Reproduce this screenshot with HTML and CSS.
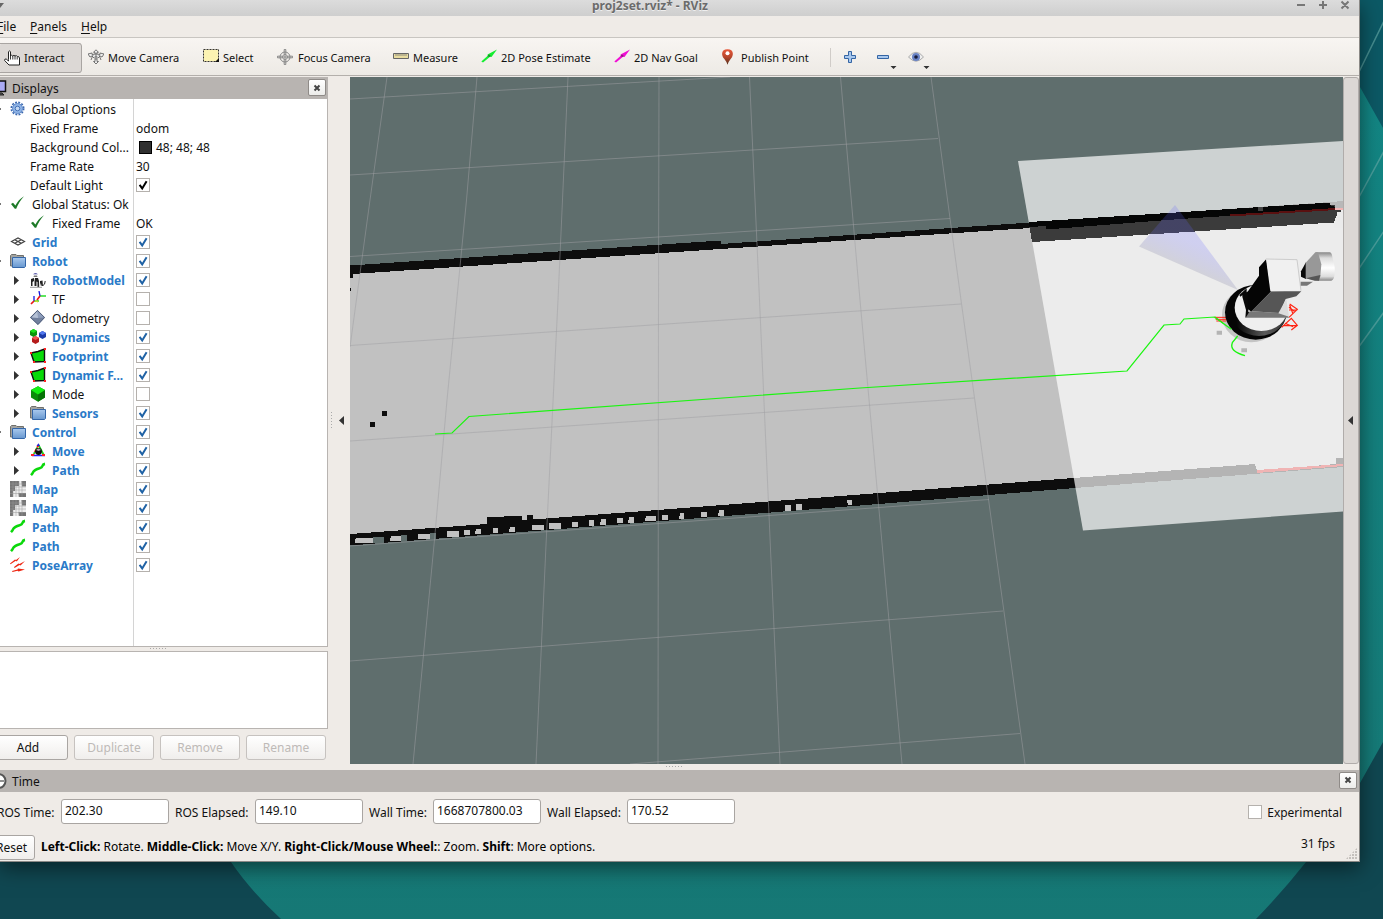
FILE: index.html
```html
<!DOCTYPE html>
<html lang="en">
<head>
<meta charset="utf-8">
<title>proj2set.rviz* - RViz</title>
<link rel="stylesheet" href="styles.css">
</head>
<body>
<svg class="defs" width="0" height="0">
  <defs>
    <linearGradient id="gf" x1="0" y1="0" x2="0" y2="1"><stop offset="0" stop-color="#a9c9ee"/><stop offset="1" stop-color="#6797cf"/></linearGradient>
    <linearGradient id="gpin" x1="0" y1="0" x2="0" y2="1"><stop offset="0" stop-color="#e8593a"/><stop offset=".5" stop-color="#b8462c"/><stop offset="1" stop-color="#50301c"/></linearGradient>
    <symbol id="tick" viewBox="0 0 14 14"><path d="M3.600 6.800 L6.200 10.400 L10.600 3.200" fill="none" stroke="currentColor" stroke-width="2"/></symbol>
    <symbol id="gear" viewBox="0 0 16 16"><circle cx="7.500" cy="7.500" r="6.200" fill="none" stroke="#3a68b0" stroke-width="1.600" stroke-dasharray="1.9 1.35"/><circle cx="7.500" cy="7.500" r="5" fill="#8fb4e6" stroke="#5c87c8"/><circle cx="7.500" cy="7.500" r="2.300" fill="#c4d9f4" stroke="#4673b8"/></symbol>
    <symbol id="ok" viewBox="0 0 16 16"><path d="M1 8 L3 6.700 L5.400 9.600 C7.500 5.500 10 2.600 14 .2 C10.500 4 8 8 6.200 12.800 L4.800 12.800 Z" fill="#1d7a28"/></symbol>
    <symbol id="grid" viewBox="0 0 16 16"><path d="M1.500 7.500 L8 4 L14.500 7.500 L8 11 Z M4.700 5.700 L11.300 9.300 M11.300 5.700 L4.700 9.300" fill="none" stroke="#444" stroke-width="1.200"/></symbol>
    <symbol id="folder" viewBox="0 0 16 16"><path d="M.5 13V2.500L1.500 1.500H6L7 2.500H13.500V13Z" fill="#a3a39f" stroke="#70706c"/><path d="M2.500 4.500H15.500V13.500L14.500 14.500H2.500Z" fill="url(#gf)" stroke="#3466a8"/></symbol>
    <symbol id="robot" viewBox="0 0 16 16"><path d="M3 2.200Q5.500.2 8 2.200Z" fill="#23238c"/><path d="M4 3.500H7L7.500 5H3.500Z" fill="#777"/><path d="M1 7L4 6V9L2.500 10V14H1ZM5 6H8L9 9V15H7.500V10L6.500 9.500V14H4.500V9ZM10 9L12.500 8.500L13 14H11.500L10.800 11 9.800 15Z" fill="#222"/><path d="M0 15.300h12" stroke="#999"/><path d="M13 13.500Q15 13 15.200 9" fill="none" stroke="#222"/></symbol>
    <symbol id="tf" viewBox="0 0 16 16"><g fill="none" stroke-width="1.300"><path d="M4 10H9M10 5H16" stroke="#27dd27"/><path d="M4 10V5M10 5L9 0" stroke="#1616e0"/><path d="M4 10L1 13M10 5L7 9" stroke="#ec1818" stroke-width="1.700"/><path d="M5 9.500L8 11" stroke="#d9d91c"/></g></symbol>
    <symbol id="odo" viewBox="0 0 16 16"><path d="M7.500 0L15 7.500L8 15L0 7.500Z" fill="#71809d"/><path d="M7.500 1L8 8L1.500 7.500Z" fill="#b5c1d6"/><path d="M8 1L14 7.500L8 8Z" fill="#8e9dbb"/><path d="M7.500 .5L14.500 7.500L8 14.500L.5 7.500Z" fill="none" stroke="#4a5876" stroke-width=".8"/></symbol>
    <symbol id="dyn" viewBox="0 0 16 16"><path d="M0 2L3.500 0L7 2V6L3.500 8L0 6Z" fill="#0c930c"/><path d="M0 2L3.500 0L7 2L3.500 4Z" fill="#1be31b"/><path d="M9 4L12.500 2L16 4V8L12.500 10L9 8Z" fill="#1c3ba8"/><path d="M9 4L12.500 2L16 4L12.500 6Z" fill="#5278ee"/><path d="M2 9L5.500 7L9 9V13L5.500 15L2 13Z" fill="#b51b1b"/><path d="M2 9L5.500 7L9 9L5.500 11Z" fill="#f05454"/></symbol>
    <symbol id="poly" viewBox="0 0 16 16"><path d="M1 5L8 3.500L14.500 1V13.500L4 14Z" fill="#08da08" stroke="#111" stroke-width="1.400"/><path d="M0 4h2v2H0zM14 0h2v2h-2zM14 13h2v2h-2zM3 13h2v2H3z" fill="#f22"/></symbol>
    <symbol id="cube" viewBox="0 0 16 16"><path d="M1 4L8 .2L15 4V11.500L8 15.800L1 11.500Z" fill="#0a8d0a"/><path d="M8 8V15.800L15 11.500V4Z" fill="#067306"/><path d="M1 4L8 .2L15 4L8 8.500Z" fill="#13f013"/></symbol>
    <symbol id="move" viewBox="0 0 16 16"><path d="M8.500 2L14 12.500" stroke="#1bd51b" stroke-width="1.800"/><path d="M8.500 2L3 12.500" stroke="#f11" stroke-width="1.800" stroke-dasharray="3 2"/><path d="M8.500 2L3 12.500" stroke="#1bd51b" stroke-width="1.800" stroke-dasharray="2 3" stroke-dashoffset="2"/><path d="M2 12.500H15" stroke="#22f" stroke-width="1.500"/><path d="M6.500 3L8.500 .3L10 3Z" fill="#22d"/><path d="M1 11h3v2H1zM12 11h3v2h-3z" fill="#f22"/><circle cx="8.500" cy="8.500" r="3.400" fill="#0d0d0d"/><path d="M6 7Q8.500 4 11 7L8.500 8Z" fill="#aaa"/></symbol>
    <symbol id="path" viewBox="0 0 16 16"><path d="M1 13.200C4.500 9.500 1.800 10.200 5.500 7.900S11.800 6.800 12.300 4.300Q12.800 2.200 15 1.900" fill="none" stroke="#0bd80b" stroke-width="2.600"/></symbol>
    <symbol id="map" viewBox="0 0 16 16"><path d="M0 0H16V16H0Z" fill="#eee"/><path d="M0 0H9V5H5V10H3V16H0ZM11.500 0H16V5.500H12ZM8.500 12H16V16H9Z" fill="#757575"/><path d="M3 0V16M6 0V16M9 0V16M12 0V16M0 3H16M0 6H16M0 9H16M0 12.500H16" stroke="#999" stroke-width=".5"/></symbol>
    <symbol id="poses" viewBox="0 0 16 16"><path d="M0 6.500L5 2.500L6 3L10 0L6.800 4.500L5.800 3.800L.5 7.300ZM4 10L8.500 6.500L9.500 7L15 4L10.500 8.500L9.500 8L4.500 11ZM2 14L7.500 12.500L8 11.500L15 12.500L8.500 14.500L7.500 13.800L2.500 15Z" fill="#ee2612"/></symbol>
    <symbol id="arrow" viewBox="0 0 16 16"><path d="M.3 12.500L7 6.600L6.500 5.500L16 .5L10.500 8L9 7.800L2 13.500Z" fill="currentColor"/><path d="M6 7l2-1.500 2 1.500-1.500 1z" fill="#222" opacity=".45"/></symbol>
  </defs>
</svg>
<svg class="wallpaper" viewBox="0 0 1383 919">
  <defs><linearGradient id="wr" x1="0" y1="0" x2="0" y2="1"><stop offset="0" stop-color="#128886"/><stop offset="1" stop-color="#167875"/></linearGradient></defs>
  <rect width="1383" height="919" fill="#104751"/>
  <path d="M0 0H1383V742L1360 783Q1336 824 1306 862Q1284 890 1256 919H281Q250 890 231 862Z" fill="url(#wr)"/>
  <path d="M1300 0H1383V128L1360 87Z" fill="#0c5965"/>
  <path d="M1358 74L1384 21M1358 199L1384 151M1358 270L1384 231M1358 348L1384 312" stroke="#65aaa8" stroke-width="1.500" opacity=".65"/>
</svg>
<div class="window">
  <header class="titlebar">
    <i class="wm-menu"></i><span class="title">proj2set.rviz* - RViz</span>
    <svg class="wm" width="60" height="16" viewBox="1295 0 60 16"><path d="M1297 5h8M1319 5h8M1323 1v8M1341.500 1.500l7 7M1348.500 1.500l-7 7" stroke="#777" stroke-width="2"/></svg>
  </header>
  <nav class="menu"><span class="m1"><u>F</u>ile</span><span class="m2"><u>P</u>anels</span><span><u>H</u>elp</span></nav>
  <div class="toolbar">
    <div class="tool active"><svg viewBox="0 0 16 16"><path d="M4.500 9.500V1.700Q5.500 .2 6.500 1.700V6Q7.700 4.400 8.700 6Q10 4.600 11 6Q12.500 5 13.200 6.500Q15 6 15.500 8V15H5L.6 10.500Q.4 8.600 2.200 9L4.500 11Z" fill="#fff" stroke="#222"/><path d="M6.500 6V9.500M8.800 6V9.500M11 6V9.500M13.200 7V9.500" stroke="#222" stroke-width=".9"/></svg><span>Interact</span></div>
    <div class="tool w-move"><svg viewBox="0 0 16 16"><path d="M8 .8L5.500 3.300H7L7 5H9V3.300H10.500ZM8 15L5.500 12.500H7V10H9V12.500H10.500ZM0 5L4 4V5.500L8 5L12 5.500V4L16 5L14 8L12 7L10 9H6L4 7L2 8ZM5 6L3 11M11 6L13 11" fill="#eee" stroke="#666" stroke-width=".9"/><circle cx="8" cy="7.500" r="1.300" fill="#888"/></svg><span>Move Camera</span></div>
    <div class="tool w-select"><svg viewBox="0 0 16 16"><path d="M.5 .5H15.500V12.500H.5Z" fill="#fcf3b2" stroke="#333" stroke-dasharray="2 1"/><path d="M16 9V13H12Z" fill="#111"/></svg><span>Select</span></div>
    <div class="tool w-focus"><svg viewBox="0 0 16 16"><g fill="none" stroke="#888"><circle cx="8" cy="8" r="5"/><circle cx="8" cy="8" r="2.500"/><path d="M7.200 5V.5H8.800V5M7.200 11V15.500H8.800V11M5 7.200H.5V8.800H5M11 7.200H15.500V8.800H11M8 5V11M5 8H11"/></g></svg><span>Focus Camera</span></div>
    <div class="tool w-measure"><svg viewBox="0 0 16 16"><path d="M.5 4.500H15.500V9.500H.5Z" fill="#e8dca0" stroke="#666"/><path d="M3 5V7M5 5V7M7 5V7M9 5V7M11 5V7M13 5V7" stroke="#777" stroke-width=".8"/></svg><span>Measure</span></div>
    <div class="tool w-pose"><svg class="green" viewBox="0 0 16 16"><use href="#arrow"/></svg><span>2D Pose Estimate</span></div>
    <div class="tool w-nav"><svg class="pink" viewBox="0 0 16 16"><use href="#arrow"/></svg><span>2D Nav Goal</span></div>
    <div class="tool w-pub"><svg viewBox="0 0 16 16"><path d="M7.500 .2C.5 .2 1.500 7 4 9.500Q6.500 12.500 7.500 15.800Q8.500 12.500 11 9.500C13.500 7 14.500 .2 7.500 .2Z" fill="url(#gpin)"/><circle cx="7.500" cy="4.200" r="2" fill="#fff"/></svg><span>Publish Point</span></div>
    <i class="sep"></i>
    <svg class="tb-extra" viewBox="840 45 100 28"><path d="M848.500 51.500h3v4h4v3h-4v4h-3v-4h-4v-3h4zM877.500 55.500h11v3h-11z" fill="#a8c8ee" stroke="#3465a4"/><path d="M890.500 66h6l-3 3zM923.500 66h6l-3 3z" fill="#333"/><path d="M908.500 57Q916 47.500 923.500 57Q916 65.500 908.500 57Z" fill="#eee" stroke="#aaa"/><circle cx="916" cy="57" r="4" fill="#6882c4"/><circle cx="916" cy="57" r="1.800" fill="#171c3a"/></svg>
  </div>
  <div class="middle">
    <aside class="displays">
      <div class="dock-head"><svg class="dock-icon" viewBox="0 0 18 18"><path d="M1 2H15.500V12.500H1Z" fill="#aaaaf4" stroke="#111" stroke-width="1.500"/><path d="M7 16H14L12 14H9" fill="#555" stroke="#222"/></svg><span>Displays</span><b class="close"><svg viewBox="0 0 8 8"><path d="M1.500 1.500l5 5M6.500 1.500l-5 5" stroke="#444" stroke-width="2"/></svg></b></div>
      <div class="tree">
        <div class="row exp"><div class="name"><svg><use href="#gear"/></svg>Global Options</div></div>
        <div class="row"><div class="name prop">Fixed Frame</div><div class="val">odom</div></div>
        <div class="row"><div class="name prop">Background Col...</div><div class="val"><i class="swatch"></i>48; 48; 48</div></div>
        <div class="row"><div class="name prop">Frame Rate</div><div class="val">30</div></div>
        <div class="row"><div class="name prop">Default Light</div><div class="val"><i class="cb dark"><svg><use href="#tick"/></svg></i></div></div>
        <div class="row exp"><div class="name"><svg><use href="#ok"/></svg>Global Status: Ok</div></div>
        <div class="row"><div class="name sub"><svg><use href="#ok"/></svg>Fixed Frame</div><div class="val">OK</div></div>
        <div class="row"><div class="name on"><svg><use href="#grid"/></svg>Grid</div><div class="val"><i class="cb"><svg><use href="#tick"/></svg></i></div></div>
        <div class="row exp"><div class="name on"><svg><use href="#folder"/></svg>Robot</div><div class="val"><i class="cb"><svg><use href="#tick"/></svg></i></div></div>
        <div class="row"><div class="name sub tri on"><svg><use href="#robot"/></svg>RobotModel</div><div class="val"><i class="cb"><svg><use href="#tick"/></svg></i></div></div>
        <div class="row"><div class="name sub tri"><svg><use href="#tf"/></svg>TF</div><div class="val"><i class="cb"></i></div></div>
        <div class="row"><div class="name sub tri"><svg><use href="#odo"/></svg>Odometry</div><div class="val"><i class="cb"></i></div></div>
        <div class="row"><div class="name sub tri on"><svg><use href="#dyn"/></svg>Dynamics</div><div class="val"><i class="cb"><svg><use href="#tick"/></svg></i></div></div>
        <div class="row"><div class="name sub tri on"><svg><use href="#poly"/></svg>Footprint</div><div class="val"><i class="cb"><svg><use href="#tick"/></svg></i></div></div>
        <div class="row"><div class="name sub tri on"><svg><use href="#poly"/></svg>Dynamic F...</div><div class="val"><i class="cb"><svg><use href="#tick"/></svg></i></div></div>
        <div class="row"><div class="name sub tri"><svg><use href="#cube"/></svg>Mode</div><div class="val"><i class="cb"></i></div></div>
        <div class="row"><div class="name sub tri on"><svg><use href="#folder"/></svg>Sensors</div><div class="val"><i class="cb"><svg><use href="#tick"/></svg></i></div></div>
        <div class="row exp"><div class="name on"><svg><use href="#folder"/></svg>Control</div><div class="val"><i class="cb"><svg><use href="#tick"/></svg></i></div></div>
        <div class="row"><div class="name sub tri on"><svg><use href="#move"/></svg>Move</div><div class="val"><i class="cb"><svg><use href="#tick"/></svg></i></div></div>
        <div class="row"><div class="name sub tri on"><svg><use href="#path"/></svg>Path</div><div class="val"><i class="cb"><svg><use href="#tick"/></svg></i></div></div>
        <div class="row"><div class="name on"><svg><use href="#map"/></svg>Map</div><div class="val"><i class="cb"><svg><use href="#tick"/></svg></i></div></div>
        <div class="row"><div class="name on"><svg><use href="#map"/></svg>Map</div><div class="val"><i class="cb"><svg><use href="#tick"/></svg></i></div></div>
        <div class="row"><div class="name on"><svg><use href="#path"/></svg>Path</div><div class="val"><i class="cb"><svg><use href="#tick"/></svg></i></div></div>
        <div class="row"><div class="name on"><svg><use href="#path"/></svg>Path</div><div class="val"><i class="cb"><svg><use href="#tick"/></svg></i></div></div>
        <div class="row"><div class="name on"><svg><use href="#poses"/></svg>PoseArray</div><div class="val"><i class="cb"><svg><use href="#tick"/></svg></i></div></div>
      </div>
      <div class="hsplit"><i></i></div>
      <div class="help"></div>
      <div class="buttons"><span class="btn first">Add</span><span class="btn off">Duplicate</span><span class="btn off">Remove</span><span class="btn off">Rename</span></div>
    </aside>
    <div class="vsplit"><i class="dots"></i><i class="left"></i></div>
    <svg class="view" viewBox="350 77 993 687">
      <defs>
        <linearGradient id="cone" gradientUnits="userSpaceOnUse" x1="1200" y1="230" x2="1182" y2="272"><stop offset=".3" stop-color="#6464ff" stop-opacity=".21"/><stop offset="1" stop-color="#999" stop-opacity=".3"/></linearGradient>
        <linearGradient id="cyl" x1="0" y1="0" x2="0" y2="1"><stop offset="0" stop-color="#888"/><stop offset=".2" stop-color="#ddd"/><stop offset=".55" stop-color="#fff"/><stop offset=".85" stop-color="#ddd"/><stop offset="1" stop-color="#888"/></linearGradient>
        <linearGradient id="rim" x1="0" y1="0" x2="1" y2="0"><stop offset=".1" stop-color="#050505"/><stop offset=".6" stop-color="#5a5a5a"/><stop offset="1" stop-color="#333"/></linearGradient>
      </defs>
      <rect x="350" y="77" width="993" height="687" fill="#5f6e6d"/>
      <g shape-rendering="crispEdges">
        <path d="M350 269L1343 204V465L350 540Z" fill="#c1c1c1"/>
        <path d="M350 265.500L721 240.500V244L1030 222.500L1330 202V209L1030 228L353 274V278H350ZM350 288h1v3h-1z" fill="#0d0d0d"/>
        <path d="M350 534L487 524V517.500L522 515.500V520H527V514.500H533V519.500L860 494.500L1255 464L1257 471L1336 464V458H1343V467L1075 488L860 505.500L350 545.500Z" fill="#0d0d0d"/>
        <path d="M355 539l2-1h16v5h-18zM391 536h10v5h-11zM418 534h12v5h-12zM447 531h12v6h-12zM464 530h6v5h-6zM476 529h5v5h-6zM493 528h5v5h-5zM510 527h5v5h-6zM532 525h12v5h-12zM549 523h12v6h-12zM572 522h6v5h-6zM589 520h5v6h-5zM601 519h5v6h-6zM617 518h6v5h-6zM629 517h5v6h-6zM646 516h10v5h-11zM662 515h6v5h-6zM680 513h4v6h-5zM701 512h6v5h-6zM719 510h5v6h-6zM785 505h6v6h-6zM796 504h6v6h-6zM847 500h5v5h-4z" fill="#c1c1c1"/>
        <path d="M373 537h11v6h-11zM401 535h6v6h-6zM430 533h6v6h-6z" fill="#5f6e6d"/>
        <path d="M370 422h5v5h-5zM382 411h5v5h-5z" fill="#0d0d0d"/>
      </g>
      <g class="gridlines">
        <path d="M350 99L730 77M350 175L938 138.500M350 256.500L950 218.500M350 345.500L961 304M350 441L974 398M350 546L989 499.500M350 661L1003 611M630 764L1020 733.500"/>
        <path d="M387 77L370 200L350 347M477 77L466.500 200L447 400L434 545L413 764M568 77L558 300L546 545L536 764M659 77L658.500 300L658 764M749.500 77L759.500 300L780 764M840.500 77L860 300L902 764M931 77L961 300L1025 764"/>
      </g>
      <path d="M1018 161L1343 141V511.500L1083 530.500Z" fill="#fff" opacity=".69"/>
      <g shape-rendering="crispEdges">
        <path d="M1029 223L1330 202.500L1335 205L1341 211L1336 216L1334 222.500L1032 242Z" fill="#3b3b3b"/>
        <path d="M1337 212h6v16h-9v-5h2v-4h1z" fill="#ebebeb"/>
        <path d="M1029 222L1330 202.500V205L1335 207V209L1180 219L1046 229.500V226L1029 227Z" fill="#050606"/>
        <path d="M1258 207h5v4h-5z" fill="#444"/><path d="M1230 214.500L1336 208V210L1230 216.500Z" fill="#5a1010"/>
        <path d="M1330 202L1343 201V208H1335V205H1330Z" fill="#b8b8b8"/><path d="M1335 208h8v2h-8z" fill="#f0b4b4"/>
        <path d="M1257 470L1343 464V466L1257 473Z" fill="#f0b4b4"/>
      </g>
      <path d="M1175 205L1139 246.500L1238 290Z" fill="url(#cone)"/>
      <path d="M435 434L452 433L469 416.500L860 388L1127 371L1164 325L1180 324L1184 319L1215 317L1234 331" class="route"/>
      <g transform="translate(1183 230) scale(.33333)">
        <path d="M101 302h16v12h-16zM175 355h17v12h-17z" fill="#b4b4b4"/>
        <ellipse cx="205" cy="255" rx="88" ry="82" fill="#c4c4c4"/>
        <path d="M95 262h35M98 268h32M100 273h30" stroke="#f21" stroke-width="3"/>
        <ellipse cx="218" cy="247" rx="92" ry="82" fill="#050505"/>
        <ellipse cx="228" cy="243" rx="84" ry="75" fill="url(#rim)"/>
        <ellipse cx="235" cy="233" rx="80" ry="70" fill="#efefef"/>
        <path d="M320 222L343 238L318 262M318 240H343M320 225L330 252M318 232L334 244M296 292L325 265L343 286L325 300M300 287H343M306 280L330 290" stroke="#f21" stroke-width="3.500" fill="none"/>
        <path d="M169 195L191 175V185L172 200ZM178 192L196 184V245L205 252L187 263L189 240L178 200Z" fill="#080808"/>
        <path d="M250 87L228 112V137L195 184V238L205 245L265 184Z" fill="#050505"/>
        <path d="M200 244L312 250L318 263L188 263Z" fill="#777"/>
        <path d="M205 244L265 184H355L340 199L308 207L290 249Z" fill="#565656"/>
        <path d="M310 207L318 260L286 250Z" fill="#dcdcdc"/>
        <path d="M249 87L342 89L354 182L262 184Z" fill="#f0f0f0"/>
        <path d="M249 87L342 89L354 182" fill="none" stroke="#bbb" stroke-width="2"/>
        <path d="M369 97L354 124V140L369 147Z" fill="#080808"/>
        <path d="M353 155L390 155L372 167H353Z" fill="#777"/>
        <path d="M398 67H440Q446 67 448 80L455 110Q457 151 445 152H405Z" fill="url(#cyl)"/>
        <path d="M368 98L397 67H405L415 103L412 139L405 152L368 145Z" fill="#989898"/>
        <path d="M368 145L412 135L408 152H395Z" fill="#555"/>
        <path d="M95 262L145 298M164 318L148 338Q138 364 186 377" stroke="#1bf510" stroke-width="4" fill="none"/>
      </g>
    </svg>
    <div class="rail"><i class="left"></i></div>
  </div>
  <div class="gap"><i></i></div>
  <div class="dock-head time"><svg class="dock-icon" viewBox="0 0 18 18"><circle cx="8.500" cy="9" r="7" fill="#fff" stroke="#555" stroke-width="2"/><path d="M9 4V9H14" stroke="#222" fill="none"/></svg><span>Time</span><b class="close"><svg viewBox="0 0 8 8"><path d="M1.500 1.500l5 5M6.500 1.500l-5 5" stroke="#444" stroke-width="2"/></svg></b></div>
  <div class="times">
    <label class="l1">ROS Time:</label><span class="field">202.30</span>
    <label class="l2">ROS Elapsed:</label><span class="field">149.10</span>
    <label class="l3">Wall Time:</label><span class="field">1668707800.03</span>
    <label class="l4">Wall Elapsed:</label><span class="field">170.52</span>
    <span class="exper"><i class="cb"></i>Experimental</span>
  </div>
  <footer class="status"><span class="btn reset">Reset</span><p><b>Left-Click:</b> Rotate. <b>Middle-Click:</b> Move X/Y. <b>Right-Click/Mouse Wheel:</b>: Zoom. <b>Shift</b>: More options.</p><span class="fps">31 fps</span><i class="grip"></i></footer>
</div>
</body>
</html>
```
FILE: styles.css
```css
* { box-sizing: border-box; }
body { margin: 0; width: 1383px; height: 919px; overflow: hidden; position: relative; font: 12px/19px "Noto Sans", sans-serif; color: #111; }
i { font-style: normal; }
svg { display: block; flex: none; }
.defs { position: absolute; }
.wallpaper { position: absolute; left: 0; top: 0; width: 1383px; height: 919px; }
.window { position: relative; width: 1360px; height: 862px; display: flex; flex-direction: column; background: #efebe7; border-right: 1px solid #8b8986; border-bottom: 1px solid #8b8986; box-shadow: 0 6px 20px rgba(0,0,0,.5); white-space: nowrap; }
.titlebar { height: 16px; flex: none; display: flex; align-items: flex-start; background: linear-gradient(#dcdcdc, #cecece); }
.wm-menu { width: 4px; height: 5px; margin-top: 3px; background: #666; clip-path: polygon(0 0, 100% 0, 0 100%); }
.title { flex: 1; margin-left: 588px; line-height: 11px; font-weight: 700; color: #6b6b6b; text-shadow: 0 1px #eee; }
.wm { margin-right: 4px; }
.menu { height: 22px; flex: none; display: flex; border-bottom: 1px solid #c8c5c1; line-height: 21px; }
.menu u { text-underline-offset: 2px; }
.menu .m1 { width: 30px; text-indent: -3px; }
.menu .m2 { width: 51px; }
.toolbar { height: 38px; flex: none; display: flex; align-items: center; background: linear-gradient(#f8f5f2, #edeae5); border-bottom: 1px solid #b3afab; font-size: 11px; }
.tool { display: flex; align-items: center; gap: 4px; }
.tool span { padding-top: 2px; }
.tool svg { width: 16px; height: 16px; }
.tool.active { width: 88px; height: 30px; margin-top: 2px; padding-left: 4px; background: linear-gradient(to right, #dcd8d5 0 81px, transparent 81px); border-radius: 3px; position: relative; }
.tool.active span { padding-top: 0; }
.tool.active::after { content: ""; position: absolute; inset: 0 6px 0 -4px; border: 1px solid #a9a5a2; border-radius: 3px; }
.w-move { width: 115px; } .w-select { width: 75px; } .w-focus { width: 115px; } .w-measure { width: 88px; } .w-pose { width: 133px; } .w-nav { width: 106px; } .w-pub { width: 110px; }
.tool.w-focus { margin-left: -1px; width: 116px; gap: 5px; }
.tool.w-pub { gap: 5px; }
.green { color: #15ee30; } .pink { color: #f00fd4; }
.sep { width: 1px; height: 19px; margin: 2px 9px 0 0; background: #d0ccc8; }
.tb-extra { width: 100px; height: 28px; margin-top: 4px; }
.middle { height: 688px; flex: none; display: flex; padding-top: 1px; }
.displays { width: 328px; height: 687px; display: flex; flex-direction: column; }
.dock-head { height: 22px; flex: none; display: flex; align-items: center; background: #b8b4b1; }
.dock-icon { width: 18px; height: 18px; margin-left: -10px; margin-right: 4px; }
.dock-head .close { width: 18px; height: 17px; margin: -1px 2px 0 auto; border: 1px solid #8f8b88; border-radius: 2px; background: linear-gradient(#fff, #ececea); display: grid; place-items: center; }
.close svg { width: 8px; height: 8px; }
.tree { height: 548px; flex: none; padding-top: 1px; background: linear-gradient(to right, #fff 133px, #d4d4d4 133px 134px, #fff 134px); border-right: 1px solid #b8b4b1; border-bottom: 1px solid #b8b4b1; }
.row { height: 19px; display: flex; }
.name { width: 133px; display: flex; align-items: center; gap: 6px; padding-left: 10px; }
.name svg { width: 16px; height: 16px; margin-top: -1px; }
.name.prop, .name.sub { padding-left: 30px; }
.name.on { font-weight: 700; color: #2a7ac8; }
.name.tri { padding-left: 14px; }
.name.tri::before { content: ""; width: 5px; height: 9px; margin-right: 5px; background: #333; clip-path: polygon(0 0, 100% 50%, 0 100%); }
.exp { background: linear-gradient(#777, #777) 0 8px / 1px 2px no-repeat; }
.val { display: flex; align-items: center; padding-left: 3px; }
.swatch { width: 13px; height: 13px; margin: 0 4px 0 3px; background: #303030; border: 1px solid #000; }
.cb { display: inline-block; width: 14px; height: 14px; background: #fff; border: 1px solid #b5b1ad; color: #1f62a5; }
.val .cb { margin-top: -1px; }
.cb svg { width: 14px; height: 14px; margin: -1px; }
.cb.dark { color: #000; }
.hsplit { height: 4px; flex: none; }
.hsplit i, .gap i { display: block; width: 17px; height: 1px; margin: 1px 0 0 150px; background: repeating-linear-gradient(to right, #aaa 0 1px, transparent 1px 3px); }
.help { height: 78px; flex: none; background: #fff; border: 1px solid #b8b4b1; border-left: 0; }
.buttons { display: flex; gap: 6px; padding-top: 6px; }
.btn { width: 80px; height: 25px; border: 1px solid #a9a5a2; border-radius: 3px; background: linear-gradient(#fff, #f0eeec); text-align: center; line-height: 23px; }
.btn.first { width: 80px; margin-left: -12px; }
.btn.off { color: #bebab7; border-color: #c6c2bf; }
.vsplit { width: 22px; display: flex; align-items: center; gap: 7px; padding-left: 3px; }
.dots { width: 1px; height: 17px; background: repeating-linear-gradient(#aaa 0 1px, transparent 1px 3px); }
.left { width: 5px; height: 9px; background: #333; clip-path: polygon(100% 0, 0 50%, 100% 100%); }
.view { width: 993px; height: 687px; }
.gridlines path { fill: none; stroke: #a0a0a4; stroke-opacity: .5; stroke-width: 1; }
.route { fill: none; stroke: #1bf510; stroke-width: 1.200; }
.rail { width: 16px; height: 687px; background: #dcd8d5; border: 1px solid #b0acaa; border-radius: 3px; display: flex; align-items: center; padding-left: 4px; }
.gap { height: 6px; flex: none; }
.gap i { margin: 0 0 0 666px; position: relative; top: 2px; }
.dock-head.time .close { margin-right: 2px; margin-top: -2px; }
.times { height: 40px; flex: none; display: flex; align-items: center; }
.l1 { width: 61px; text-indent: -3px; } .l2 { width: 86px; padding-left: 6px; } .l3 { width: 70px; padding-left: 6px; } .l4 { width: 86px; padding-left: 6px; }
.field { width: 108px; height: 25px; margin-top: -1px; padding-left: 3px; line-height: 22px; background: #fff; border: 1px solid #a9a5a2; border-radius: 3px; }
.exper { margin-left: auto; margin-right: 17px; display: flex; align-items: center; gap: 5px; }
.status { height: 29px; flex: none; display: flex; position: relative; }
.reset { width: 47px; height: 25px; margin: 3px 0 0 -12px; }
.status p { margin: 5px 0 0 6px; color: #000; }
.fps { margin: 2px 24px 0 auto; }
.grip { position: absolute; right: 2px; bottom: 2px; width: 11px; height: 11px; background: radial-gradient(circle at 1px 1px, #c4c0bc .8px, transparent 1px) 0 0 / 3px 3px; clip-path: polygon(100% 0, 100% 100%, 0 100%); }
```
